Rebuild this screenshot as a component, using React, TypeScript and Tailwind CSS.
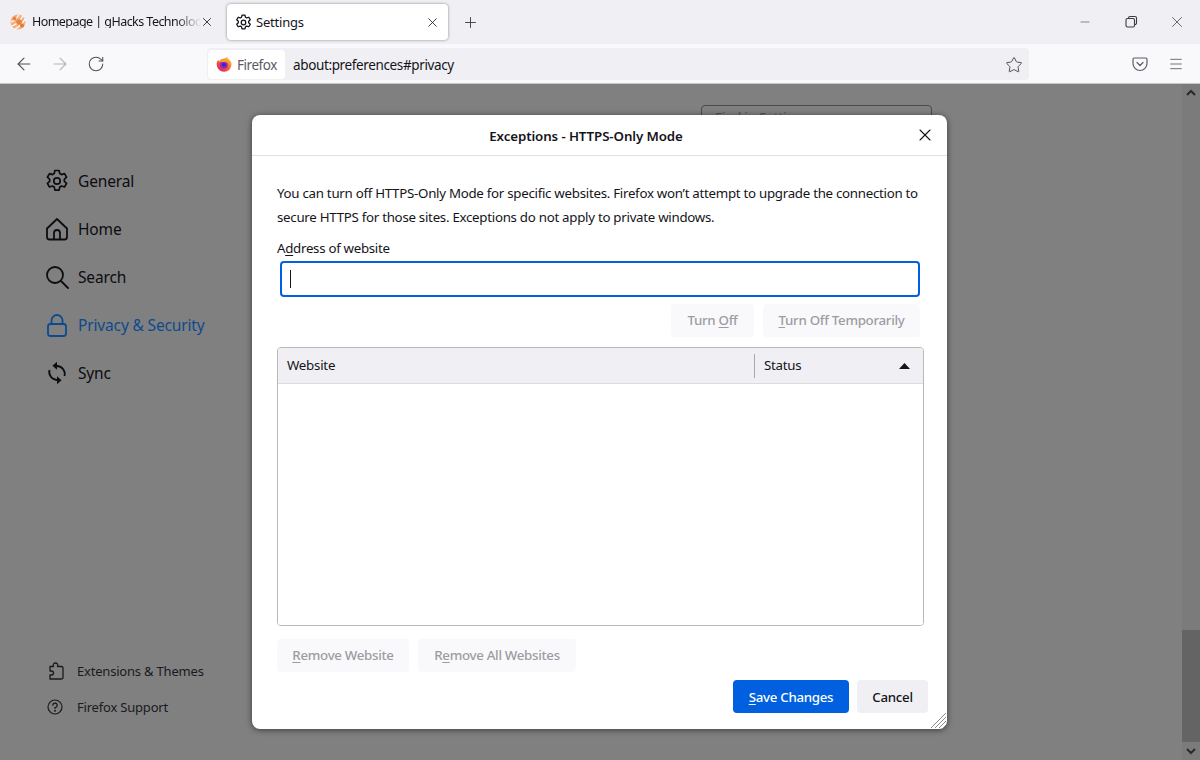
import React from "react";
import { ArrowLeft, ArrowRight, RotateCw, Star, Menu, X, Plus, Minus } from "lucide-react";

const Gear = ({ s = 24, w = 2 }: { s?: number; w?: number }) => (
  <svg width={s} height={s} viewBox="0 0 24 24" fill="none" stroke="currentColor" strokeWidth={w} strokeLinejoin="round">
    <circle cx="12" cy="12" r="3.2" />
    <path d="M9.9 1.5h4.2l.7 3.1 1.7 1 3-1 2.1 3.6-2.3 2.1v2l2.3 2.1-2.1 3.6-3-1-1.7 1-.7 3.1H9.9l-.7-3.1-1.7-1-3 1-2.1-3.6 2.3-2.1v-2L2.400 8.200l2.100-3.600 3 1 1.700-1z" />
  </svg>
);

const FirefoxLogo = () => (
  <svg width="16" height="16" viewBox="0 0 16 16">
    <defs>
      <linearGradient id="fx" x1="0.8" y1="0.1" x2="0.2" y2="0.9">
        <stop offset="0" stopColor="#ffc43a" />
        <stop offset="0.45" stopColor="#ff6a2a" />
        <stop offset="1" stopColor="#e8205f" />
      </linearGradient>
    </defs>
    <path d="M11 .6c.3 1.600 1.400 2 2.400 3.200C14.800 5.300 15.500 6.700 15.500 8.500A7.400 7.400 0 0 1 .7 8.300C.7 6.500 1.300 5 2.300 3.800c0 .9.300 1.400.9 1.800C4 3.600 5.500 3 7.600 2.700 9.200 2.400 10.500 1.900 11 .6z" fill="url(#fx)" />
    <circle cx="7.900" cy="8.700" r="3.900" fill="#7b2fc9" />
    <circle cx="7.900" cy="8.700" r="1.700" fill="#4b1fa0" />
    <path d="M3 5.500c1.500-1.600 3.600-2 5.400-1.400 1.900.6 3.300 2.300 3.500 4-.9-1.400-2.300-2-4-2-1.800 0-3.300.5-4.900-.6z" fill="#ff9a2e" />
  </svg>
);

const GhacksLogo = () => (
  <svg width="16" height="16" viewBox="0 0 16 16" fill="none">
    <circle cx="8" cy="8" r="7.500" fill="#f4b183" />
    <path d="M2 12C5 11 10 7 13 2" stroke="#fff" strokeWidth="1.300" />
    <path d="M1 8C4 7 7 4 9 .8" stroke="#fff" strokeWidth="1.200" />
    <path d="M5 15C9 13 13 9 15 5" stroke="#fff" strokeWidth="1.300" />
    <circle cx="9" cy="8" r="2.800" fill="#e8843e" />
    <circle cx="4.500" cy="4.500" r="2" fill="#e8843e" />
    <circle cx="12" cy="11.500" r="2" fill="#e07a30" />
  </svg>
);

const NavItem = ({ icon, label, active }: { icon: React.ReactNode; label: string; active?: boolean }) => (
  <div className={`flex h-12 items-center ${active ? "text-[#0d4a8e]" : "text-[#0d0c10]"}`}>
    <div className="flex w-[32px] justify-center">{icon}</div>
    <span className="ml-[5px] mt-[2px] text-[15.500px] leading-none tracking-[-0.15px]">{label}</span>
  </div>
);

const FootItem = ({ icon, label }: { icon: React.ReactNode; label: string }) => (
  <div className="flex h-9 items-center text-[#1a1a1e]">
    <div className="flex w-[31px] justify-center">{icon}</div>
    <span className="ml-[5px] text-[13px] leading-none tracking-[-0.2px]">{label}</span>
  </div>
);

const A = ({ children }: { children: React.ReactNode }) => (
  <span className="underline decoration-[1px] underline-offset-2">{children}</span>
);

const DisabledBtn = ({ className, children }: { className: string; children: React.ReactNode }) => (
  <div className={`flex h-[33px] items-center justify-center rounded bg-[#f9f9fb] text-[13.300px] font-medium tracking-[-0.3px] text-[#9c9ca2] ${className}`}>
    <span>{children}</span>
  </div>
);

export default function App() {
  return (
    <div className="flex h-[760px] w-[1200px] flex-col overflow-hidden bg-white font-['Noto_Sans',sans-serif] text-[#15141a]">
      <div className="flex h-11 items-start bg-[#f0f0f4]">
        <div className="ml-[10px] mt-1 flex h-9 w-[206px] items-center">
          <GhacksLogo />
          <span className="ml-[6px] w-[169px] overflow-hidden whitespace-nowrap text-[12.500px] leading-none tracking-[-0.55px] [mask-image:linear-gradient(to_right,black_85%,transparent)]">Homepage | gHacks Technology News</span>
          <X size={14} strokeWidth={1.400} className="ml-[-1px]" />
        </div>
        <div className="ml-[11px] mt-1 flex h-9 w-[221px] items-center rounded bg-white pl-[8px] shadow-[0_0_3px_rgba(0,0,0,0.45)]">
          <Gear s={17} w={1.800} />
          <span className="ml-[4px] flex-1 text-[13px] leading-none tracking-[-0.2px]">Settings</span>
          <X size={15} strokeWidth={1.300} className="mr-[8px]" />
        </div>
        <div className="ml-[14px] mt-[14px]"><Plus size={17} strokeWidth={1.300} className="text-[#3b3b40]" /></div>
        <div className="flex-1" />
        <div className="mr-[14px] mt-[15px] flex items-start gap-[32px] text-[#3b3b40]">
          <Minus size={14} strokeWidth={1} />
          <svg width="14" height="14" viewBox="0 0 14 14" fill="none" stroke="currentColor" strokeWidth="1.100"><rect x="2" y="3.500" width="8.500" height="8.500" rx="1.500" /><path d="M4.500 3.500V3A1.500 1.500 0 0 1 6 1.500h5A1.500 1.500 0 0 1 12.500 3v5A1.500 1.500 0 0 1 11 9.500h-.5" /></svg>
          <X size={18} strokeWidth={1} className="-ml-[2px] -mt-[2px]" />
        </div>
      </div>

      <div className="flex h-10 items-center border-b border-[#c8c8cc] bg-[#f9f9fb] pt-[1px]">
        <div className="ml-[14px] flex w-[193px] items-center gap-4 text-[#4f4f58]">
          <ArrowLeft size={20} strokeWidth={1.300} />
          <ArrowRight size={20} strokeWidth={1.300} className="text-[#b3b3b8]" />
          <RotateCw size={18} strokeWidth={1.400} className="ml-[1px]" />
        </div>
        <div className="flex h-8 w-[822px] items-center rounded bg-[#f0f0f4] pl-[1px]">
          <div className="flex h-[29px] w-[77px] items-center rounded bg-white pl-[8px]">
            <FirefoxLogo />
            <span className="ml-[5px] mt-[3px] text-[13.500px] leading-none tracking-[-0.45px] text-[#5b5b66]">Firefox</span>
          </div>
          <span className="ml-2 mt-[3px] flex-1 text-[13.500px] leading-none tracking-[-0.37px]">about:preferences#privacy</span>
          <Star size={18} strokeWidth={1.300} className="mr-[6px] mt-[1px] text-[#4a4a52]" />
        </div>
        <div className="flex flex-1 items-center justify-end gap-5 pr-4 text-[#5b5b66]">
          <svg width="16" height="16" viewBox="0 0 16 16" fill="none" stroke="currentColor" strokeWidth="1.200" strokeLinecap="round" strokeLinejoin="round"><path d="M2.200 2h11.600c.7 0 1.200.5 1.200 1.200V7.500A7 7 0 0 1 1 7.500V3.200C1 2.500 1.500 2 2.200 2z" /><path d="M5 6.500l3 3 3-3" /></svg>
          <Menu size={16} strokeWidth={1.300} />
        </div>
      </div>

      <div className="relative flex flex-1 bg-[#808080]">
        <aside className="flex w-[252px] flex-col justify-between pb-[35px] pl-[41px] pt-[73px]">
          <div className="flex flex-col">
            <NavItem label="General" icon={<Gear s={24} w={1.700} />} />
            <NavItem label="Home" icon={
              <svg width="24" height="24" viewBox="0 0 24 24" fill="none" stroke="currentColor" strokeWidth="1.800" strokeLinejoin="round"><path d="M2 11.500L12 2l10 9.500V20a2.500 2.500 0 0 1-2.500 2.500h-15A2.500 2.500 0 0 1 2 20z" /><path d="M9 22.500V16a3 3 0 0 1 6 0v6.500" /></svg>
            } />
            <NavItem label="Search" icon={
              <svg width="24" height="24" viewBox="0 0 24 24" fill="none" stroke="currentColor" strokeWidth="1.800" strokeLinecap="round"><circle cx="10" cy="10" r="8" /><path d="M16 16l7 7" /></svg>
            } />
            <NavItem active label="Privacy & Security" icon={
              <svg width="22" height="24" viewBox="0 0 22 24" fill="none" stroke="currentColor" strokeWidth="1.800"><rect x="2" y="11" width="18" height="12" rx="2.500" /><path d="M5.500 11V7.500a5.500 5.500 0 0 1 11 0V11" /></svg>
            } />
            <NavItem label="Sync" icon={
              <svg width="22" height="24" viewBox="0 0 22 24" fill="none" stroke="currentColor" strokeWidth="1.800"><path d="M11 5a8 8 0 0 1 7.500 10" /><path d="M11 19a8 8 0 0 1-7.500-10" /><path d="M11 .8v8L6.500 4.800zM11 23.200v-8l4.500 4z" fill="currentColor" stroke="none" /></svg>
            } />
          </div>
          <div className="flex flex-col">
            <FootItem label="Extensions & Themes" icon={
              <svg width="16" height="18" viewBox="0 0 16 18" fill="none" stroke="currentColor" strokeWidth="1.300" strokeLinejoin="round"><path d="M1 4.500h3.500C3.500 2.500 5 1 6.500 1S9.500 2.500 8.500 4.500h4c.8 0 1.500.7 1.500 1.500v9.500c0 .8-.7 1.500-1.500 1.500H1v-4h1.500a2 2 0 0 0 0-4H1z" /></svg>
            } />
            <FootItem label="Firefox Support" icon={
              <svg className="-ml-[3px]" width="16" height="16" viewBox="0 0 16 16" fill="none" stroke="currentColor" strokeWidth="1.200" strokeLinecap="round"><circle cx="8" cy="8" r="7" /><path d="M5.800 6.200A2.200 2.200 0 1 1 8 8.500v1" /><circle cx="8" cy="11.800" r=".4" fill="currentColor" /></svg>
            } />
          </div>
        </aside>

        <div className="flex flex-1 justify-end pr-[250px] pt-[21px]">
          <div className="h-8 w-[231px] rounded-[4px] border border-[#4a4a4a] pl-[13px] pt-[1px] text-[13px] leading-5 text-[#505050]">Find in Settings</div>
        </div>

        <div className="flex w-[18px] flex-col justify-between bg-[#7b7b7b] text-[#2a2a2a]">
          <svg className="ml-[4px] mt-[5px]" width="10" height="8" viewBox="0 0 10 8" fill="none" stroke="currentColor" strokeWidth="2"><path d="M1 6l4-4 4 4" /></svg>
          <div className="flex flex-col">
            <div className="h-[112px] bg-[#646464]" />
            <div className="flex h-[18px] items-center pl-[4px]">
              <svg width="10" height="8" viewBox="0 0 10 8" fill="none" stroke="currentColor" strokeWidth="2"><path d="M1 2l4 4 4-4" /></svg>
            </div>
          </div>
        </div>

        <div className="absolute left-[252px] top-[31px] flex h-[614px] w-[695px] flex-col rounded-lg bg-white shadow-[0_1px_6px_rgba(0,0,0,0.55)]">
          <div className="relative flex h-[41px] shrink-0 items-center justify-center border-b border-[#e0e0e2] pr-[27px] pt-[4px]">
            <span className="text-[13.300px] font-semibold leading-none tracking-[-0.1px]">Exceptions - HTTPS-Only Mode</span>
            <X size={20} strokeWidth={1.300} className="absolute right-[12px] top-[10px]" />
          </div>
          <div className="relative flex flex-1 flex-col pl-[25px]">
            <p className="mt-[25px] whitespace-nowrap text-[13.300px] leading-6 tracking-[-0.28px]">
              You can turn off HTTPS-Only Mode for specific websites. Firefox won’t attempt to upgrade the connection to<br />
              secure HTTPS for those sites. Exceptions do not apply to private windows.
            </p>
            <label className="mt-[7px] text-[13.300px] leading-6 tracking-[-0.3px]">A<A>d</A>dress of website</label>
            <div className="ml-[3px] mt-[1px] flex h-[36px] w-[640px] items-center rounded border-2 border-[#0060df] pl-[8px]">
              <div className="h-[18px] w-px bg-[#15141a]" />
            </div>
            <div className="ml-[394px] mt-[7px] flex w-[249px] gap-[9px]">
              <DisabledBtn className="w-[83px]">Turn <A>O</A>ff</DisabledBtn>
              <DisabledBtn className="w-[157px]"><A>T</A>urn Off Temporarily</DisabledBtn>
            </div>
            <div className="mt-[10px] flex h-[279px] w-[647px] flex-col overflow-hidden rounded border border-[#b8b8ba]">
              <div className="flex h-9 shrink-0 items-center border-b border-[#dcdcde] bg-[#f0f0f4] text-[13.300px] tracking-[-0.25px]">
                <span className="w-[476px] pl-[9px]">Website</span>
                <div className="h-[24px] w-px bg-[#a8a8aa]" />
                <span className="ml-[9px] flex-1">Status</span>
                <svg className="mr-[13px]" width="11" height="6" viewBox="0 0 11 6"><path d="M5.500 0L11 6H0z" fill="#15141a" /></svg>
              </div>
              <div className="flex-1 bg-white" />
            </div>
            <div className="mt-[13px] flex gap-[9px]">
              <DisabledBtn className="w-[132px]"><A>R</A>emove Website</DisabledBtn>
              <DisabledBtn className="w-[158px]">R<A>e</A>move All Websites</DisabledBtn>
            </div>
            <div className="ml-[456px] mt-2 flex w-[195px] gap-2">
              <div className="flex h-[33px] w-[116px] shrink-0 items-center justify-center rounded bg-[#0060df] pt-[3px] text-[13.300px] font-medium tracking-[-0.3px] text-white"><span><A>S</A>ave Changes</span></div>
              <div className="flex h-[33px] w-[71px] shrink-0 items-center justify-center rounded bg-[#f0f0f4] pt-[3px] text-[13.300px] font-medium tracking-[-0.3px]">Cancel</div>
            </div>
            <svg className="absolute bottom-[1px] right-[1px]" width="15" height="15" viewBox="0 0 15 15" stroke="#8a8a8a" strokeWidth="1"><path d="M0 15L15 0M4 15L15 4M8 15l7-7M12 15l3-3" /></svg>
          </div>
        </div>
      </div>
    </div>
  );
}
